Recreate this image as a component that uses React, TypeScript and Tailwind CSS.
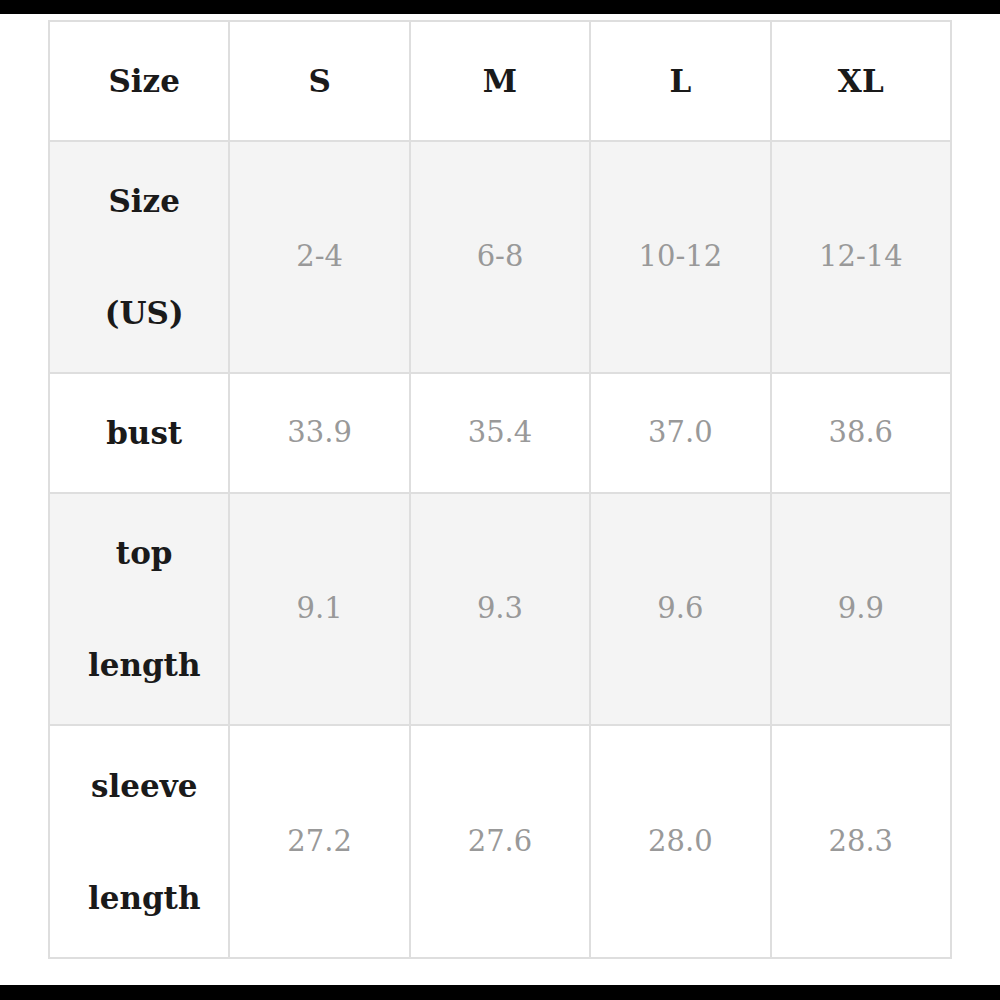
import React from "react";

const sizes = ["S", "M", "L", "XL"];

const rows: { label: string[]; values: string[]; shaded: boolean; h: string }[] = [
  { label: ["Size", "(US)"], values: ["2-4", "6-8", "10-12", "12-14"], shaded: true, h: "h-[230px]" },
  { label: ["bust"], values: ["33.9", "35.4", "37.0", "38.6"], shaded: false, h: "h-[118px]" },
  { label: ["top", "length"], values: ["9.1", "9.3", "9.6", "9.9"], shaded: true, h: "h-[230px]" },
  { label: ["sleeve", "length"], values: ["27.2", "27.6", "28.0", "28.3"], shaded: false, h: "h-[231px]" },
];

const serif = "font-['DejaVu_Serif',serif]";

const App = () => {
  return (
    <div className="w-[1000px] h-[1000px] bg-white flex flex-col">
      <div className="h-[14px] bg-black" />
      <div className="flex-1 pt-[6px] pl-[48px]">
        <div className="w-[904px] grid grid-cols-5 gap-[2px] p-[2px] bg-[#dedede]">
          {/* header row */}
          <div className={`h-[118px] bg-white pl-[10px] flex items-center justify-center ${serif} font-bold text-[31px] text-[#1a1a1a]`}>
            Size
          </div>
          {sizes.map((s) => (
            <div key={s} className={`h-[118px] bg-white flex items-center justify-center ${serif} font-bold text-[31px] text-[#1a1a1a]`}>
              {s}
            </div>
          ))}

          {rows.map((r, i) => (
            <React.Fragment key={i}>
              <div className={`${r.h} ${r.shaded ? "bg-[#f4f4f4]" : "bg-white"} pl-[10px] flex flex-col items-center justify-center ${serif} font-bold text-[31px] leading-[112px] text-[#1a1a1a]`}>
                {r.label.map((l) => (
                  <span key={l}>{l}</span>
                ))}
              </div>
              {r.values.map((v, j) => (
                <div key={j} className={`${r.h} ${r.shaded ? "bg-[#f4f4f4]" : "bg-white"} flex items-center justify-center ${serif} text-[29px] text-[#999999]`}>
                  {v}
                </div>
              ))}
            </React.Fragment>
          ))}
        </div>
      </div>
      <div className="h-[15px] bg-black" />
    </div>
  );
};

export default App;
